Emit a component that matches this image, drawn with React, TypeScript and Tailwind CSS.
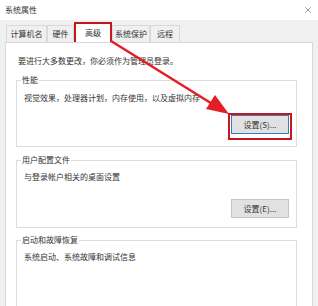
import { X } from 'lucide-react';

const tabs = [
  { label: '计算机名', w: 'w-[41px]' },
  { label: '硬件', w: 'w-[27px]' },
  { label: '高级', w: 'w-[38px]', active: true },
  { label: '系统保护', w: 'w-[38px]' },
  { label: '远程', w: 'w-[30px]' },
];

function Group({
  title,
  desc,
  button,
  descPad,
  btnGap,
  bottomPad,
  mark,
}: {
  title: string;
  desc: string;
  button?: string;
  descPad: string;
  btnGap: string;
  bottomPad: string;
  mark?: boolean;
}) {
  return (
    <fieldset className={`border border-[#dcdcdc] px-[7px] ${bottomPad}`}>
      <legend className="ml-[-3px] px-[1px] text-[8px] leading-[12px] bg-white">{title}</legend>
      <div className={`${descPad} text-[8px] leading-[12px]`}>{desc}</div>
      {button && (
        <div className={`flex justify-end ${btnGap}`}>
          <div className="relative">
            <button
              className={`block w-[58px] h-[19px] text-[8px] leading-[17px] bg-[#e1e1e1] border ${
                mark ? 'border-[#3d7ab8]' : 'border-[#c4c4c4]'
              }`}
            >
              {button}
            </button>
            {mark && (
              <span className="absolute -left-[3px] -top-[2px] -right-[3px] -bottom-[6px] border-2 border-[#c4161c]" />
            )}
          </div>
        </div>
      )}
    </fieldset>
  );
}

export default function App() {
  return (
    <div
      className="relative w-[318px] h-[306px] overflow-hidden bg-[#f0f0f0] text-[#333] flex flex-col"
      style={{ fontFamily: '"Noto Sans CJK SC", "Noto Sans", sans-serif' }}
    >
      <div className="h-[20px] shrink-0 bg-white flex items-center justify-between pl-[5px] pr-[5px]">
        <span className="text-[8px] leading-[12px]">系统属性</span>
        <X size={10} strokeWidth={1.2} />
      </div>

      <div className="h-[22px] shrink-0 flex items-end pl-[6px]">
        {tabs.map((t) =>
          t.active ? (
            <div
              key={t.label}
              className={`${t.w} h-[20px] bg-white border-2 border-b-0 border-[#c4161c] text-[8px] leading-[12px] flex items-center justify-center`}
            >
              {t.label}
            </div>
          ) : (
            <div
              key={t.label}
              className={`${t.w} h-[17px] bg-[#f0f0f0] border border-b-0 border-[#d9d9d9] text-[8px] leading-[12px] flex items-center justify-center`}
            >
              {t.label}
            </div>
          ),
        )}
      </div>

      <div className="flex-1 min-h-0 overflow-hidden mx-[5px] bg-white border border-[#d9d9d9] border-b-0 pl-[10px] pr-[15px] pt-[12px]">
        <div className="text-[8px] leading-[12px] pl-[2px]">要进行大多数更改，你必须作为管理员登录。</div>
        <div className="mt-[7px]">
          <Group
            title="性能"
            desc="视觉效果，处理器计划，内存使用，以及虚拟内存"
            button="设置(S)..."
            descPad="pt-[6px]"
            btnGap="mt-[11px]"
            bottomPad="pb-[12px]"
            mark
          />
        </div>
        <div className="mt-[7px]">
          <Group
            title="用户配置文件"
            desc="与登录帐户相关的桌面设置"
            button="设置(E)..."
            descPad="pt-[5px]"
            btnGap="mt-[16px]"
            bottomPad="pb-[9px]"
          />
        </div>
        <div className="mt-[6px]">
          <Group
            title="启动和故障恢复"
            desc="系统启动、系统故障和调试信息"
            descPad="pt-[5px]"
            btnGap=""
            bottomPad="pb-[60px]"
          />
        </div>
      </div>

      <svg className="absolute left-0 top-0 pointer-events-none" width="318" height="306">
        <line x1="111" y1="41" x2="214" y2="105" stroke="#e31e24" strokeWidth="2.5" />
        <polygon points="229,114 206,109 215,95" fill="#e31e24" />
      </svg>
    </div>
  );
}
